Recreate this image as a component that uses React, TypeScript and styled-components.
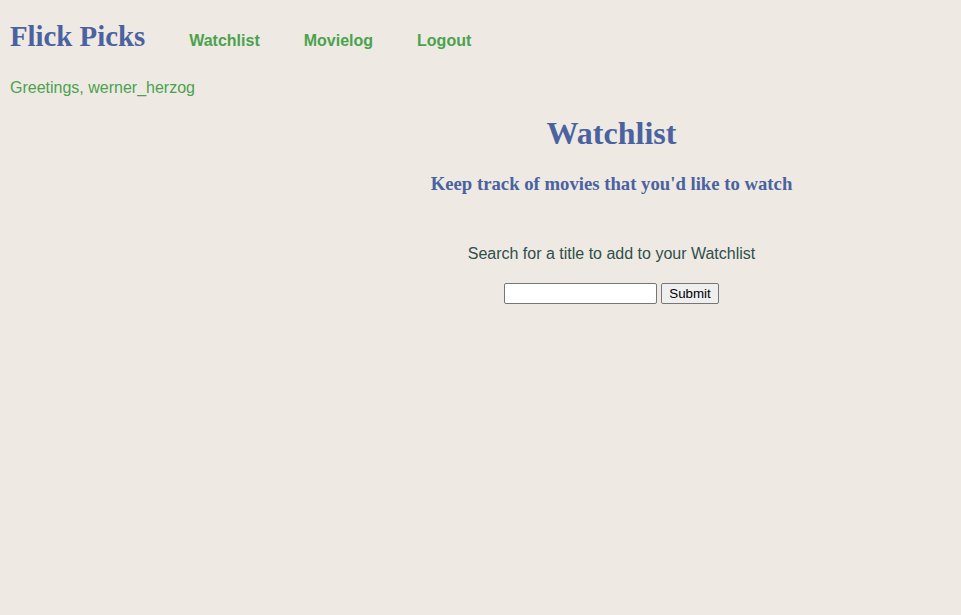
import React from "react";
import styled, { createGlobalStyle } from "styled-components";

const Global = createGlobalStyle`
  html, body { margin: 0; padding: 0; background: #eeeae3; }
  body { font-family: "Liberation Sans", Arial, sans-serif; }
  #root { min-height: 615px; }
`;

const Page = styled.div`
  padding: 0 10px;
  min-height: 615px;
  box-sizing: border-box;
`;

const Header = styled.header`
  display: flex;
  align-items: baseline;
  gap: 44px;
  padding-top: 19px;
`;

const Brand = styled.h1`
  margin: 0;
  font-family: "Liberation Serif", "Times New Roman", serif;
  font-size: 28.8px;
  font-weight: bold;
  color: #4a62a0;
  line-height: 34px;
`;

const NavLink = styled.a`
  font-family: "Liberation Sans", Arial, sans-serif;
  font-size: 16px;
  font-weight: bold;
  color: #4aa24e;
  text-decoration: none;
  cursor: pointer;
`;

const Greeting = styled.p`
  margin: 26px 0 0;
  font-size: 16px;
  line-height: 18px;
  color: #4aa24e;
`;

const Layout = styled.div`
  display: grid;
  grid-template-columns: 262px 1fr;
`;

const Main = styled.main`
  grid-column: 2;
  display: flex;
  flex-direction: column;
  align-items: center;
`;

const Title = styled.h2`
  margin: 18px 0 0;
  font-family: "Liberation Serif", "Times New Roman", serif;
  font-size: 32px;
  line-height: 37px;
  font-weight: bold;
  color: #4a62a0;
`;

const Subtitle = styled.h3`
  margin: 21px 0 0;
  font-family: "Liberation Serif", "Times New Roman", serif;
  font-size: 18.72px;
  line-height: 22px;
  font-weight: bold;
  color: #4a62a0;
`;

const Prompt = styled.p`
  margin: 50px 0 0;
  font-size: 16px;
  line-height: 18px;
  color: #2f4f4a;
`;

const Form = styled.form`
  display: flex;
  align-items: center;
  gap: 4px;
  margin-top: 20px;
`;

const Input = styled.input`
  width: 153px;
  height: 21px;
  box-sizing: border-box;
  border: 1px solid #767676;
  border-radius: 2px;
  background: #fff;
  padding: 1px 2px;
  font-size: 13px;
`;

const Button = styled.button`
  height: 21px;
  box-sizing: border-box;
  padding: 0 7px;
  border: 1px solid #767676;
  border-radius: 2px;
  background: #efefef;
  font-family: "Liberation Sans", Arial, sans-serif;
  font-size: 13.33px;
  color: #000;
`;

export default function App() {
  return (
    <>
      <Global />
      <Page>
        <Header>
          <Brand>Flick Picks</Brand>
          <NavLink>Watchlist</NavLink>
          <NavLink>Movielog</NavLink>
          <NavLink>Logout</NavLink>
        </Header>
        <Greeting>Greetings, werner_herzog</Greeting>
        <Layout>
          <Main>
            <Title>Watchlist</Title>
            <Subtitle>Keep track of movies that you'd like to watch</Subtitle>
            <Prompt>Search for a title to add to your Watchlist</Prompt>
            <Form onSubmit={(e) => e.preventDefault()}>
              <Input type="text" />
              <Button type="submit">Submit</Button>
            </Form>
          </Main>
        </Layout>
      </Page>
    </>
  );
}
